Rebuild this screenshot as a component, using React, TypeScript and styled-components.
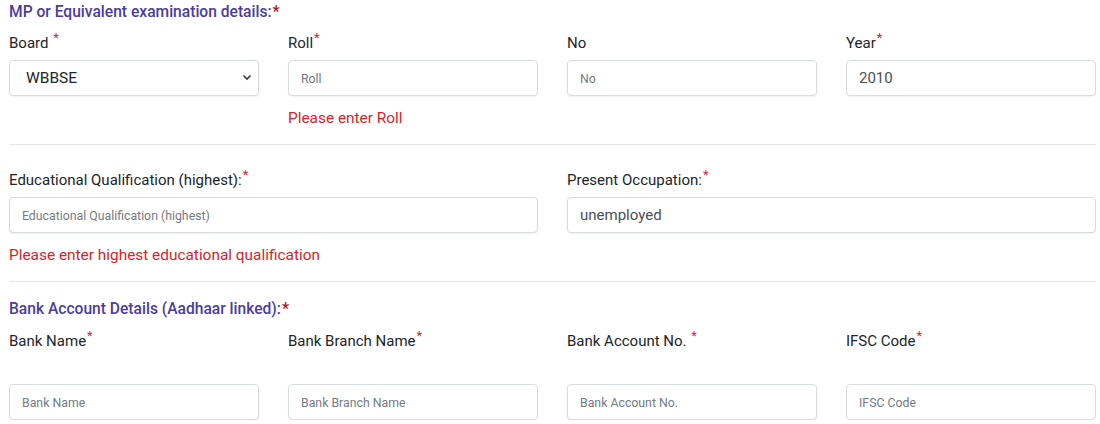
import React from 'react';
import styled, { createGlobalStyle } from 'styled-components';

const GlobalStyle = createGlobalStyle`
  body {
    margin: 0;
    background: #fff;
    font-family: Roboto, "Liberation Sans", sans-serif;
    color: #212529;
  }
`;

const StyledForm = styled.div`
  width: 1087px;
  padding: 2px 0 0 9px;
`;

const StyledHeading = styled.div<{ $gap?: number }>`
  font-size: 15.6px;
  font-weight: 500;
  line-height: 20px;
  color: #4b3c9e;
  margin-bottom: ${(p) => p.$gap ?? 10}px;
`;

const StyledStar = styled.span<{ $dark?: boolean }>`
  color: ${(p) => (p.$dark ? '#b0102a' : '#c8283c')};
  font-size: ${(p) => (p.$dark ? '16px' : '13px')};
  vertical-align: ${(p) => (p.$dark ? 'baseline' : 'super')};
  line-height: 0;
  margin-left: 1px;
`;

const StyledRow = styled.div<{ $cols: number }>`
  display: grid;
  grid-template-columns: repeat(${(p) => p.$cols}, 1fr);
  column-gap: 29px;
`;

const StyledField = styled.div`
  display: flex;
  flex-direction: column;
  min-width: 0;
`;

const StyledLabel = styled.label<{ $gap?: number }>`
  font-size: 15px;
  line-height: 22px;
  color: #212529;
  margin-bottom: ${(p) => p.$gap ?? 6}px;
`;

const StyledInput = styled.input`
  box-sizing: border-box;
  height: 36px;
  width: 100%;
  padding: 0 12px;
  border: 1px solid #d9dcdf;
  border-radius: 4px;
  box-shadow: 0 1px 2px rgba(0, 0, 0, 0.06);
  font-family: Roboto, "Liberation Sans", sans-serif;
  font-size: 15px;
  color: #495057;
  background: #fff;
  outline: none;
  &::placeholder {
    font-size: 12.3px;
    color: #757b82;
  }
`;

const StyledSelectWrap = styled.div`
  position: relative;
  height: 36px;
`;

const StyledSelect = styled.select`
  box-sizing: border-box;
  appearance: none;
  height: 36px;
  width: 100%;
  padding: 0 16px;
  border: 1px solid #d9dcdf;
  border-radius: 4px;
  box-shadow: 0 1px 2px rgba(0, 0, 0, 0.06);
  font-family: Roboto, "Liberation Sans", sans-serif;
  font-size: 15.5px;
  color: #212529;
  background: #fff;
  outline: none;
`;

const StyledChevron = styled.svg`
  position: absolute;
  right: 7px;
  top: 14px;
  pointer-events: none;
`;

const StyledError = styled.div`
  font-size: 15.4px;
  line-height: 22px;
  color: #d8232a;
  margin-top: 11px;
`;

const StyledRule = styled.hr<{ $after: number }>`
  border: 0;
  border-top: 1px solid #e6e6e6;
  margin: 15px 0 ${(p) => p.$after}px;
`;

const Label = ({ text, star = true, gap }: { text: string; star?: boolean; gap?: number }) => (
  <StyledLabel $gap={gap}>
    {text}
    {star && <StyledStar>*</StyledStar>}
  </StyledLabel>
);

export default function App() {
  return (
    <StyledForm>
      <GlobalStyle />
      <StyledHeading>
        MP or Equivalent examination details:<StyledStar $dark>*</StyledStar>
      </StyledHeading>
      <StyledRow $cols={4}>
        <StyledField>
          <StyledLabel>
            Board <StyledStar>*</StyledStar>
          </StyledLabel>
          <StyledSelectWrap>
            <StyledSelect defaultValue="WBBSE">
              <option>WBBSE</option>
            </StyledSelect>
            <StyledChevron width="10" height="7" viewBox="0 0 10 7">
              <path d="M1.5 1.5 5 5l3.5-3.5" fill="none" stroke="#343a40" strokeWidth="1.6" />
            </StyledChevron>
          </StyledSelectWrap>
        </StyledField>
        <StyledField>
          <Label text="Roll" />
          <StyledInput placeholder="Roll" />
          <StyledError>Please enter Roll</StyledError>
        </StyledField>
        <StyledField>
          <Label text="No" star={false} />
          <StyledInput placeholder="No" />
        </StyledField>
        <StyledField>
          <Label text="Year" />
          <StyledInput defaultValue="2010" />
        </StyledField>
      </StyledRow>
      <StyledRule $after={24} />
      <StyledRow $cols={2}>
        <StyledField>
          <Label text="Educational Qualification (highest):" />
          <StyledInput placeholder="Educational Qualification (highest)" />
          <StyledError>Please enter highest educational qualification</StyledError>
        </StyledField>
        <StyledField>
          <Label text="Present Occupation:" />
          <StyledInput defaultValue="unemployed" />
        </StyledField>
      </StyledRow>
      <StyledRule $after={17} />
      <StyledHeading $gap={11}>
        Bank Account Details (Aadhaar linked):<StyledStar $dark>*</StyledStar>
      </StyledHeading>
      <StyledRow $cols={4}>
        <StyledField>
          <Label text="Bank Name" gap={32} />
          <StyledInput placeholder="Bank Name" />
        </StyledField>
        <StyledField>
          <Label text="Bank Branch Name" gap={32} />
          <StyledInput placeholder="Bank Branch Name" />
        </StyledField>
        <StyledField>
          <Label text="Bank Account No. " gap={32} />
          <StyledInput placeholder="Bank Account No." />
        </StyledField>
        <StyledField>
          <Label text="IFSC Code" gap={32} />
          <StyledInput placeholder="IFSC Code" />
        </StyledField>
      </StyledRow>
    </StyledForm>
  );
}
